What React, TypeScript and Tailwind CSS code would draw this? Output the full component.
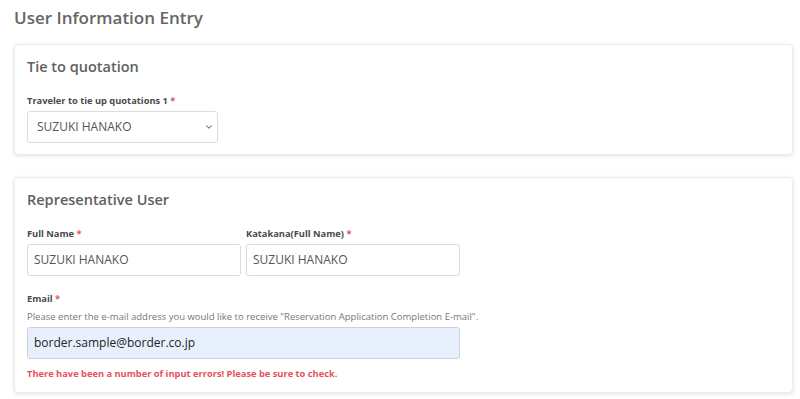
import { ChevronDown } from "lucide-react"

function Label({ children, className = "mb-[3px]" }: { children: string; className?: string }) {
  return (
    <div className={`text-[9.3px] font-bold text-[#4a4a4a] leading-[14px] ${className}`}>
      {children} <span className="text-[#e8505b]">*</span>
    </div>
  )
}

function Card({ title, children }: { title: string; children: React.ReactNode }) {
  return (
    <div className="bg-white rounded-[4px] border border-[#ececec] shadow-[0_1px_4px_rgba(0,0,0,0.12)] px-[12px] pt-[12px] pb-[11px]">
      <h2 className="text-[14.5px] font-semibold text-[#606060] leading-[20px] mb-[17px]">{title}</h2>
      {children}
    </div>
  )
}

export default function App() {
  return (
    <div
      className="w-[800px] h-[399px] bg-white overflow-hidden px-[14px] pt-[6px]"
      style={{ fontFamily: '"Open Sans", sans-serif' }}
    >
      <h1 className="text-[17px] font-semibold text-[#666] leading-[24px] mb-[14px]">User Information Entry</h1>
      <div className="w-[779px] flex flex-col gap-[22px]">
        <Card title="Tie to quotation">
          <Label>Traveler to tie up quotations 1</Label>
          <div className="w-[191px] h-[32px] border border-[#dcdcdc] rounded-[3px] flex items-center justify-between pl-[9px] pr-[3px] text-[12px] text-[#555]">
            <span>SUZUKI HANAKO</span>
            <ChevronDown size={10} strokeWidth={2.5} className="text-[#666]" />
          </div>
        </Card>
        <Card title="Representative User">
          <div className="flex gap-[5px]">
            <div className="w-[214px]">
              <Label>Full Name</Label>
              <div className="h-[32px] border border-[#dcdcdc] rounded-[3px] flex items-center px-[6px] text-[12px] text-[#555]">
                SUZUKI HANAKO
              </div>
            </div>
            <div className="w-[214px]">
              <Label>Katakana(Full Name)</Label>
              <div className="h-[32px] border border-[#dcdcdc] rounded-[3px] flex items-center px-[6px] text-[12px] text-[#555]">
                SUZUKI HANAKO
              </div>
            </div>
          </div>
          <div className="mt-[16px]">
            <Label className="mb-[4px]">Email</Label>
            <div className="text-[9.5px] text-[#777] leading-[13px] mb-[4px]">
              Please enter the e-mail address you would like to receive "Reservation Application Completion E-mail".
            </div>
            <div className="w-[433px] h-[32px] border border-[#ccd3dd] bg-[#e8f0fe] rounded-[3px] flex items-center px-[6px] text-[12px] text-[#222]">
              border.sample@border.co.jp
            </div>
            <div className="text-[9.3px] font-bold text-[#e8505b] leading-[14px] mt-[8px]">
              There have been a number of input errors! Please be sure to check.
            </div>
          </div>
        </Card>
      </div>
    </div>
  )
}
